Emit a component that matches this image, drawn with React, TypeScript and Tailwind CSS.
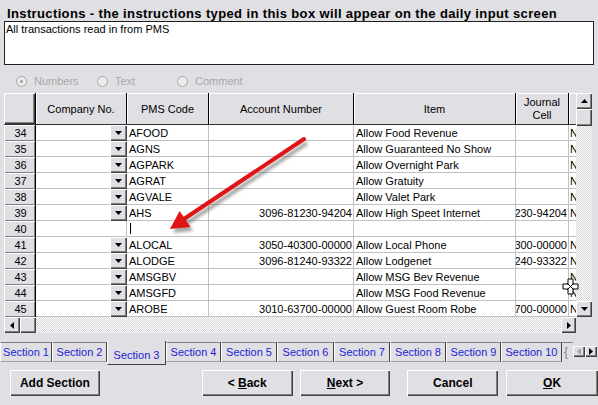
import React from 'react';

type Row = { n: number; dd: boolean; code: string; acct: string; item: string; last: string };

const rows: Row[] = [
  { n: 34, dd: true, code: 'AFOOD', acct: '', item: 'Allow Food Revenue', last: 'N' },
  { n: 35, dd: true, code: 'AGNS', acct: '', item: 'Allow Guaranteed No Show', last: 'N' },
  { n: 36, dd: true, code: 'AGPARK', acct: '', item: 'Allow Overnight Park', last: 'N' },
  { n: 37, dd: true, code: 'AGRAT', acct: '', item: 'Allow Gratuity', last: 'N' },
  { n: 38, dd: true, code: 'AGVALE', acct: '', item: 'Allow Valet Park', last: 'N' },
  { n: 39, dd: true, code: 'AHS', acct: '3096-81230-94204', item: 'Allow High Speet Internet', last: 'N' },
  { n: 40, dd: false, code: '', acct: '', item: '', last: '' },
  { n: 41, dd: true, code: 'ALOCAL', acct: '3050-40300-00000', item: 'Allow Local Phone', last: 'N' },
  { n: 42, dd: true, code: 'ALODGE', acct: '3096-81240-93322', item: 'Allow Lodgenet', last: 'N' },
  { n: 43, dd: true, code: 'AMSGBV', acct: '', item: 'Allow MSG Bev Revenue', last: 'N' },
  { n: 44, dd: true, code: 'AMSGFD', acct: '', item: 'Allow MSG Food Revenue', last: 'N' },
  { n: 45, dd: true, code: 'AROBE', acct: '3010-63700-00000', item: 'Allow Guest Room Robe', last: 'N' },
];

const raised =
  'bg-[#e0dfe3] shadow-[inset_1px_1px_0_#ffffff,inset_-1px_-1px_0_#404040,inset_-2px_-2px_0_#808080]';

function Tri({ dir, color = '#000' }: { dir: 'up' | 'down' | 'left' | 'right'; color?: string }) {
  if (dir === 'up')
    return (
      <svg width="7" height="4" viewBox="0 0 7 4"><polygon points="3.5,0 7,4 0,4" fill={color} /></svg>
    );
  if (dir === 'down')
    return (
      <svg width="7" height="4" viewBox="0 0 7 4"><polygon points="0,0 7,0 3.5,4" fill={color} /></svg>
    );
  if (dir === 'left')
    return (
      <svg width="4" height="7" viewBox="0 0 4 7"><polygon points="4,0 4,7 0,3.5" fill={color} /></svg>
    );
  return (
    <svg width="4" height="7" viewBox="0 0 4 7"><polygon points="0,0 4,3.5 0,7" fill={color} /></svg>
  );
}

function Radio({ checked }: { checked?: boolean }) {
  return (
    <div className="w-[11px] h-[11px] rounded-full border border-[#a8a8a8] bg-[#ececec] flex items-center justify-center">
      {checked && <div className="w-[3px] h-[3px] rounded-full bg-[#a0a0a0]" />}
    </div>
  );
}

const tabs = [
  { label: 'Section 1', w: 'w-[52px]' },
  { label: 'Section 2', w: 'w-[55px]' },
  { label: 'Section 3', w: 'w-[59px]', active: true },
  { label: 'Section 4', w: 'w-[55px]' },
  { label: 'Section 5', w: 'w-[56px]' },
  { label: 'Section 6', w: 'w-[57px]' },
  { label: 'Section 7', w: 'w-[56px]' },
  { label: 'Section 8', w: 'w-[56px]' },
  { label: 'Section 9', w: 'w-[55px]' },
  { label: 'Section 10', w: 'w-[61px]' },
];

export default function App() {
  return (
    <div className="relative w-[598px] h-[405px] overflow-hidden bg-[#e0dfe3] font-['Liberation_Sans',Arial,sans-serif] text-black">
      {/* Title */}
      <div className="h-[21px] pt-[6px] pl-[7px] text-[13px] leading-[15px] font-bold tracking-[0.37px] whitespace-nowrap">
        Instructions - the instructions typed in this box will appear on the daily input screen
      </div>
      {/* Text box */}
      <div className="mx-[4px] h-[44px] border border-[#202020] bg-white pl-[1px] pt-[1px] text-[11px] leading-[13px]">
        All transactions read in from PMS
      </div>
      {/* Radios */}
      <div className="h-[28px] pt-[5px] flex items-center text-[11px] leading-[13px] text-[#a8a8a8]">
        <div className="ml-[16px] w-[81px] flex items-center gap-[7px]">
          <Radio checked />
          <span>Numbers</span>
        </div>
        <div className="w-[80px] flex items-center gap-[7px]">
          <Radio />
          <span>Text</span>
        </div>
        <div className="flex items-center gap-[7px]">
          <Radio />
          <span>Comment</span>
        </div>
      </div>

      {/* Grid */}
      <div className="ml-[4px] w-[588px] flex flex-col">
        <div className="flex h-[224px]">
          <div className="w-[572px] flex flex-col text-[11px] leading-[16px]">
            {/* header */}
            <div className="flex h-[32px] border-b border-[#303030]">
              <div className={`w-[32px] shrink-0 border-r border-black ${raised}`} />
              <div className="w-[91px] shrink-0 border-r border-black shadow-[inset_1px_1px_0_#ffffff] flex items-center justify-center">Company No.</div>
              <div className="w-[82px] shrink-0 border-r border-black shadow-[inset_1px_1px_0_#ffffff] flex items-center justify-center">PMS Code</div>
              <div className="w-[145px] shrink-0 border-r border-black shadow-[inset_1px_1px_0_#ffffff] flex items-center justify-center">Account Number</div>
              <div className="w-[162px] shrink-0 border-r border-black shadow-[inset_1px_1px_0_#ffffff] flex items-center justify-center">Item</div>
              <div className="w-[53px] shrink-0 border-r border-black shadow-[inset_1px_1px_0_#ffffff] flex items-center justify-center text-center leading-[13px]">
                Journal
                <br />
                Cell
              </div>
              <div className="w-[7px] shrink-0 shadow-[inset_1px_1px_0_#ffffff]" />
            </div>
            {/* body */}
            {rows.map((r) => (
              <div key={r.n} className="flex h-[16px]">
                <div className="w-[32px] shrink-0 border-r border-black bg-[#e0dfe3] shadow-[inset_1px_1px_0_#ffffff,inset_-1px_-1px_0_#808080] text-center pl-[2px]">
                  {r.n}
                </div>
                {r.dd ? (
                  <div className="w-[91px] shrink-0 bg-white border-b border-[#c0c0c0] flex justify-end">
                    <div className={`w-[17px] h-[16px] flex items-center justify-center ${raised}`}>
                      <Tri dir="down" />
                    </div>
                  </div>
                ) : (
                  <div className="w-[91px] shrink-0 bg-white border-r border-b border-[#c0c0c0]" />
                )}
                <div className="w-[82px] shrink-0 bg-white border-r border-b border-[#c0c0c0] pl-[2px] overflow-hidden whitespace-nowrap flex items-center">
                  {r.code ? r.code : <div className="w-[1px] h-[11px] bg-black ml-[1px]" />}
                </div>
                <div className="w-[145px] shrink-0 bg-white border-r border-b border-[#c0c0c0] pr-[1px] overflow-hidden whitespace-nowrap flex justify-end">
                  {r.acct}
                </div>
                <div className="w-[162px] shrink-0 bg-white border-r border-b border-[#c0c0c0] pl-[2px] overflow-hidden whitespace-nowrap">
                  {r.item}
                </div>
                <div className="w-[53px] shrink-0 bg-white border-r border-b border-[#c0c0c0] pr-[1px] overflow-hidden whitespace-nowrap flex justify-end">
                  {r.acct}
                </div>
                <div className="w-[7px] shrink-0 bg-white border-b border-[#c0c0c0] pl-[1px] overflow-hidden whitespace-nowrap">
                  {r.last}
                </div>
              </div>
            ))}
          </div>
          {/* vertical scrollbar */}
          <div className="w-[16px] flex flex-col">
            <div className={`h-[16px] flex items-center justify-center ${raised}`}>
              <Tri dir="up" />
            </div>
            <div className={`h-[17px] ${raised}`} />
            <div className="flex-1 bg-[repeating-conic-gradient(#ffffff_0_25%,#d6d6da_0_50%)] bg-[length:2px_2px]" />
            <div className={`h-[16px] flex items-center justify-center ${raised}`}>
              <Tri dir="down" />
            </div>
          </div>
        </div>
        {/* horizontal scrollbar */}
        <div className="flex h-[16px]">
          <div className={`w-[16px] flex items-center justify-center ${raised}`}>
            <Tri dir="left" />
          </div>
          <div className={`w-[16px] ${raised}`} />
          <div className="flex-1 bg-[repeating-conic-gradient(#ffffff_0_25%,#d6d6da_0_50%)] bg-[length:2px_2px]" />
          <div className={`w-[15px] flex items-center justify-center ${raised}`}>
            <Tri dir="right" />
          </div>
          <div className="w-[16px] bg-[#e0dfe3]" />
        </div>
      </div>

      {/* Tabs */}
      <div className="mt-[9px] flex h-[24px] items-start text-[11px] leading-[13px] text-[#1c1cd4]">
        {tabs.map((t) =>
          t.active ? (
            <div
              key={t.label}
              className={`${t.w} shrink-0 h-[24px] pt-[8px] text-center border-l border-white border-r border-r-[#404040] border-b border-b-[#404040] -mt-[1px]`}
            >
              {t.label}
            </div>
          ) : (
            <div
              key={t.label}
              className={`${t.w} shrink-0 h-[20px] flex items-center justify-center border-t border-t-[#808080] border-l border-l-white border-r border-r-[#404040] border-b border-b-[#a0a0a0]`}
            >
              {t.label}
            </div>
          )
        )}
        <div className="w-[11px] h-[20px] border-t border-t-[#808080] text-[#808080] text-[12px] leading-[18px] pl-[2px]">{'{'}</div>
        <div className="flex mt-[4px]">
          <div className={`w-[12px] h-[11px] flex items-center justify-center ${raised}`}>
            <Tri dir="left" color="#a0a0a0" />
          </div>
          <div className={`w-[12px] h-[11px] flex items-center justify-center ${raised}`}>
            <Tri dir="right" />
          </div>
        </div>
      </div>

      {/* Buttons */}
      <div className="mt-[4px] flex h-[26px] text-[12px] font-bold">
        <div className={`ml-[10px] w-[90px] flex items-center justify-center ${raised}`}>Add Section</div>
        <div className={`ml-[102px] w-[91px] flex items-center justify-center ${raised}`}>
          &lt;&nbsp;<span className="underline">B</span>ack
        </div>
        <div className={`ml-[7px] w-[91px] flex items-center justify-center ${raised}`}>
          <span className="underline">N</span>ext&nbsp;&gt;
        </div>
        <div className={`ml-[17px] w-[91px] flex items-center justify-center ${raised}`}>Cancel</div>
        <div className={`ml-[8px] w-[92px] flex items-center justify-center ${raised}`}>
          <span className="underline">O</span>K
        </div>
      </div>

      {/* Red arrow overlay */}
      <svg className="absolute left-0 top-0 pointer-events-none" width="598" height="405" viewBox="0 0 598 405">
        <defs>
          <filter id="blur" x="-20%" y="-20%" width="140%" height="140%">
            <feGaussianBlur stdDeviation="1.8" />
          </filter>
        </defs>
        <g transform="translate(3,4)" filter="url(#blur)" opacity="0.55">
          <line x1="304" y1="139" x2="184" y2="219" stroke="#606060" strokeWidth="4" />
          <polygon points="170,229 180,211 190,227" fill="#606060" />
        </g>
        <line x1="304" y1="139" x2="184" y2="219" stroke="#e01414" strokeWidth="4" strokeLinecap="round" />
        <polygon points="170,229 179.6,211 190.5,227" fill="#e01414" />
      </svg>

      {/* Mouse cursor */}
      <svg className="absolute left-[562px] top-[278px] pointer-events-none" width="17" height="17" viewBox="0 0 17 17">
        <path
          d="M6 1 H11 V6 H16 V11 H11 V16 H6 V11 H1 V6 H6 Z"
          fill="#ffffff"
          stroke="#000"
          strokeWidth="1"
        />
        <path d="M5 5 L12 12 M12 5 L5 12" stroke="#000" strokeWidth="1" />
      </svg>
    </div>
  );
}
